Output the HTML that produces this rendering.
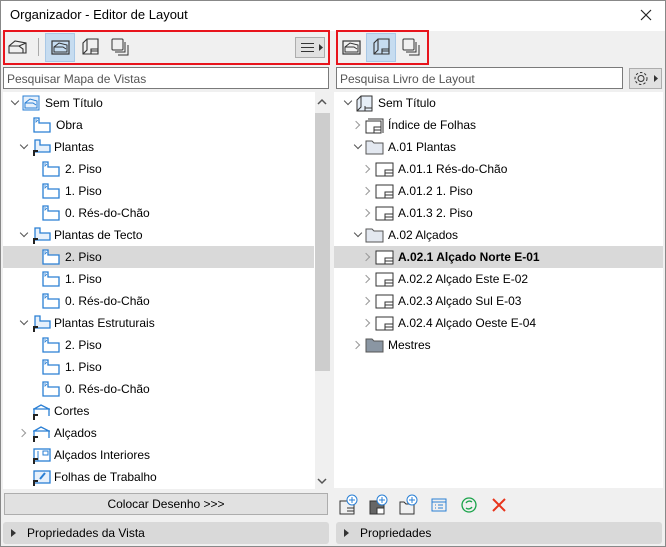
<!DOCTYPE html>
<html><head><meta charset="utf-8"><style>
*{margin:0;padding:0;box-sizing:border-box}
body{width:666px;height:547px;overflow:hidden;background:#f0f0f0;font-family:"Liberation Sans",sans-serif;font-size:12px;color:#000;position:relative}
.a{position:absolute}
.win{left:0;top:0;width:666px;height:547px;border:1px solid #888;}
.row{position:absolute;height:22px;line-height:22px;white-space:nowrap}
.chev{position:absolute;width:6px;height:6px;border-right:1.5px solid #555;border-bottom:1.5px solid #555}
.cd{transform:rotate(45deg)}
.cr{transform:rotate(-45deg);border-color:#999}
svg{position:absolute}
</style></head><body>
<div class="a win"></div>
<div class="a" style="left:1px;top:1px;width:664px;height:30px;background:#fff"></div>
<div class="a" style="left:10px;top:7px;font-size:13px">Organizador - Editor de Layout</div>
<svg style="left:640px;top:9px" width="12" height="12"><path d="M1 1L11 11M11 1L1 11" stroke="#222" stroke-width="1.2"/></svg>

<!-- left toolbar -->
<div class="a" style="left:3px;top:30px;width:327px;height:35px;border:2px solid #e8141c"></div>
<svg style="left:8px;top:39px" width="20" height="16"><path d="M1 14V7L7 2L18 4V14ZM1 7L11 7L15 10V14M11 7L18 4" fill="none" stroke="#333" stroke-width="1.1"/></svg>
<div class="a" style="left:38px;top:38px;width:1px;height:18px;background:#aaa"></div>
<div class="a" style="left:45px;top:33px;width:30px;height:29px;background:#c6dcf0;border:1px solid #a9c8e6"></div>
<svg style="left:51px;top:39px" width="20" height="17"><rect x="1" y="2" width="17" height="13" fill="none" stroke="#333" stroke-width="1.2"/><path d="M3 13V8L8 4L16 6V13ZM3 8L12 8L15 10" fill="none" stroke="#333"/></svg>
<svg style="left:81px;top:38px" width="19" height="18"><path d="M2 16V5L6 1H17V16ZM6 1V12L2 16M10 13H17M10 16V11H17" fill="none" stroke="#333" stroke-width="1.1"/></svg>
<svg style="left:111px;top:38px" width="18" height="18"><rect x="1" y="1" width="11" height="11" rx="1" fill="none" stroke="#333"/><path d="M4 14H14V4M7 17H17V7" fill="none" stroke="#333"/></svg>
<div class="a" style="left:295px;top:37px;width:30px;height:21px;background:#e1e1e1;border:1px solid #adadad"></div>
<svg style="left:300px;top:42px" width="24" height="12"><path d="M1 1.5H14M1 5.5H14M1 9.5H14" stroke="#333"/><path d="M19 2L23 5.5L19 9Z" fill="#333"/></svg>

<!-- right toolbar -->
<div class="a" style="left:336px;top:30px;width:93px;height:35px;border:2px solid #e8141c"></div>
<svg style="left:342px;top:39px" width="20" height="17"><rect x="1" y="2" width="17" height="13" fill="none" stroke="#333" stroke-width="1.2"/><path d="M3 13V8L8 4L16 6V13ZM3 8L12 8L15 10" fill="none" stroke="#333"/></svg>
<div class="a" style="left:366px;top:33px;width:30px;height:29px;background:#c6dcf0;border:1px solid #a9c8e6"></div>
<svg style="left:372px;top:38px" width="19" height="18"><path d="M2 16V5L6 1H17V16ZM6 1V12L2 16M10 13H17M10 16V11H17" fill="none" stroke="#333" stroke-width="1.1"/></svg>
<svg style="left:402px;top:38px" width="18" height="18"><rect x="1" y="1" width="11" height="11" rx="1" fill="none" stroke="#333"/><path d="M4 14H14V4M7 17H17V7" fill="none" stroke="#333"/></svg>

<!-- search boxes -->
<div class="a" style="left:3px;top:67px;width:326px;height:22px;background:#fff;border:1px solid #7a7a7a;color:#555;padding:4px 3px;font-size:12px">Pesquisar Mapa de Vistas</div>
<div class="a" style="left:336px;top:67px;width:287px;height:22px;background:#fff;border:1px solid #7a7a7a;color:#555;padding:4px 3px;font-size:12px">Pesquisa Livro de Layout</div>
<div class="a" style="left:629px;top:68px;width:33px;height:21px;background:#e1e1e1;border:1px solid #adadad"></div>
<svg style="left:632px;top:70px" width="28" height="17"><circle cx="9" cy="8.5" r="3" fill="none" stroke="#333"/><circle cx="9" cy="8.5" r="6" fill="none" stroke="#333" stroke-dasharray="2.5 2"/><path d="M22 5L26 8.5L22 12Z" fill="#333"/></svg>

<!-- left pane -->
<div class="a" style="left:3px;top:92px;width:312px;height:397px;background:#fff"></div>
<div class="a" style="left:315px;top:92px;width:15px;height:397px;background:#f0f0f0"></div>
<div class="a" style="left:315px;top:113px;width:15px;height:258px;background:#cdcdcd"></div>
<svg style="left:317px;top:98px" width="10" height="8"><path d="M1 6L5 2L9 6" fill="none" stroke="#555" stroke-width="1.5"/></svg>
<svg style="left:317px;top:477px" width="10" height="8"><path d="M1 2L5 6L9 2" fill="none" stroke="#555" stroke-width="1.5"/></svg>
<div class="a" style="left:3px;top:246px;width:311px;height:22px;background:#d9d9d9"></div>

<div id="L"></div>
<!-- right pane -->
<div class="a" style="left:334px;top:92px;width:329px;height:396px;background:#fff"></div>
<div class="a" style="left:334px;top:246px;width:329px;height:22px;background:#d9d9d9"></div>
<div id="R"></div>

<!-- bottom -->
<div class="a" style="left:4px;top:493px;width:324px;height:22px;background:#e1e1e1;border:1px solid #adadad;text-align:center;line-height:20px">Colocar Desenho &gt;&gt;&gt;</div>
<div class="a" style="left:3px;top:522px;width:326px;height:22px;background:#d9d9d9;border-radius:3px;line-height:22px;padding-left:24px">Propriedades da Vista</div>
<svg style="left:11px;top:529px" width="6" height="8"><path d="M0 0L5 4L0 8Z" fill="#333"/></svg>
<div class="a" style="left:336px;top:522px;width:326px;height:22px;background:#d9d9d9;border-radius:3px;line-height:22px;padding-left:24px">Propriedades</div>
<svg style="left:344px;top:529px" width="6" height="8"><path d="M0 0L5 4L0 8Z" fill="#333"/></svg>

<svg style="left:338px;top:494px" width="180" height="22">
<g fill="none" stroke="#333"><rect x="2" y="7" width="14" height="13"/><path d="M9 17H16M9 14H16V20"/></g><circle cx="14" cy="6" r="5" fill="#fff" stroke="#2a7fd4"/><path d="M14 3V9M11 6H17" stroke="#2a7fd4"/>
<g transform="translate(30,0)"><rect x="2" y="7" width="14" height="13" fill="#666" stroke="#333"/><path d="M9 14H16V20H9Z" fill="#fff" stroke="#333"/><circle cx="14" cy="6" r="5" fill="#fff" stroke="#2a7fd4"/><path d="M14 3V9M11 6H17" stroke="#2a7fd4"/></g>
<g transform="translate(60,0)"><path d="M2 20V8H6L8 10H16V20Z" fill="none" stroke="#333"/><circle cx="14" cy="6" r="5" fill="#fff" stroke="#2a7fd4"/><path d="M14 3V9M11 6H17" stroke="#2a7fd4"/></g>
<g transform="translate(92,0)"><rect x="2" y="5" width="14" height="12" fill="none" stroke="#2a7fd4"/><path d="M2 8H16M5 11H6M8 11H13M5 14H6M8 14H13" stroke="#2a7fd4"/></g>
<g transform="translate(122,0)"><circle cx="9" cy="11" r="7" fill="none" stroke="#1aa34a" stroke-width="1.3"/><path d="M6 9A4 4 0 0 1 12 8M12 13A4 4 0 0 1 6 14" fill="none" stroke="#1aa34a" stroke-width="1.3"/></g>
<g transform="translate(152,0)"><path d="M3 5L15 17M15 5L3 17" stroke="#e8341c" stroke-width="2"/></g>
</svg>

<script>
function ico(t){
 if(t=='root')return '<svg width="18" height="16"><rect x="1" y="1" width="16" height="14" fill="#e6f0fb" stroke="#2a7fd4"/><path d="M3 13V8L8 4L15 6V13ZM3 8L11 8L14 10" fill="none" stroke="#2a7fd4"/></svg>';
 if(t=='plan')return '<svg width="18" height="16"><path d="M1 15V1H6V6H17V15Z" fill="#fff" stroke="#2a7fd4" stroke-width="1.3"/><path d="M3 2V5L5 3" stroke="#2a7fd4" fill="none" stroke-width=".8"/></svg>';
 if(t=='pgrp')return '<svg width="20" height="18"><path d="M4 13V1H9V6H19V13Z" fill="#e6f0fb" stroke="#2a7fd4" stroke-width="1.3"/><path d="M3 17V12H7" stroke="#222" stroke-width="2" fill="none"/></svg>';
 if(t=='sec')return '<svg width="20" height="18"><path d="M3 13V6L10 2L18 6V13M2 6H19" fill="none" stroke="#2a7fd4" stroke-width="1.3"/><path d="M3 17V12H7" stroke="#222" stroke-width="2" fill="none"/></svg>';
 if(t=='int')return '<svg width="20" height="18"><rect x="3" y="2" width="16" height="12" fill="#fff" stroke="#2a7fd4" stroke-width="1.3"/><rect x="12" y="4" width="5" height="4" fill="none" stroke="#2a7fd4"/><path d="M7 4V14" stroke="#2a7fd4"/><path d="M3 17V12H7" stroke="#222" stroke-width="2" fill="none"/></svg>';
 if(t=='ws')return '<svg width="20" height="18"><rect x="3" y="2" width="16" height="12" fill="#e6f0fb" stroke="#2a7fd4" stroke-width="1.3"/><path d="M9 10L14 4" stroke="#2a7fd4" stroke-width="2"/><path d="M3 17V12H7" stroke="#222" stroke-width="2" fill="none"/></svg>';
 if(t=='book')return '<svg width="19" height="17"><path d="M2 16V5L6 1H17V16ZM6 1V12L2 16M10 13H17M10 16V11" fill="#e6eef7" stroke="#333"/></svg>';
 if(t=='sheet')return '<svg width="19" height="16"><rect x="1" y="2" width="17" height="13" fill="#fff" stroke="#333"/><path d="M10 12H18M10 15V9H18" fill="none" stroke="#333"/></svg>';
 if(t=='idx')return '<svg width="19" height="17"><path d="M3 2H18V16" fill="none" stroke="#333"/><rect x="1" y="4" width="15" height="12" fill="#fff" stroke="#333"/><path d="M9 13H16M9 16V10H16" fill="none" stroke="#333"/></svg>';
 if(t=='fold')return '<svg width="19" height="16"><path d="M1 15V2H7L9 4H18V15Z" fill="#e3e8f0" stroke="#555"/></svg>';
 if(t=='fdark')return '<svg width="19" height="16"><path d="M1 15V2H7L9 4H18V15Z" fill="#8a96a3" stroke="#555"/></svg>';
}
function row(x,y,ch,ic,txt,b){
 var h='';
 if(ch=='d')h+='<div class="chev cd" style="left:'+(x-10)+'px;top:'+(y+6)+'px"></div>';
 if(ch=='r')h+='<div class="chev cr" style="left:'+(x-12)+'px;top:'+(y+8)+'px"></div>';
 h+='<div class="a" style="left:'+x+'px;top:'+(y+3)+'px;width:20px;height:18px">'+ico(ic)+'</div>';
 h+='<div class="row" style="left:'+(x+23)+'px;top:'+y+'px;'+(b?'font-weight:bold':'')+'">'+txt+'</div>';
 return h;
}
var L=[[22,'d','root','Sem Título'],[33,'','plan','Obra'],[31,'d','pgrp','Plantas'],[42,'','plan','2. Piso'],[42,'','plan','1. Piso'],[42,'','plan','0. Rés-do-Chão'],[31,'d','pgrp','Plantas de Tecto'],[42,'','plan','2. Piso'],[42,'','plan','1. Piso'],[42,'','plan','0. Rés-do-Chão'],[31,'d','pgrp','Plantas Estruturais'],[42,'','plan','2. Piso'],[42,'','plan','1. Piso'],[42,'','plan','0. Rés-do-Chão'],[31,'','sec','Cortes'],[31,'r','sec','Alçados'],[31,'','int','Alçados Interiores'],[31,'','ws','Folhas de Trabalho']];
var h='';L.forEach(function(r,i){h+=row(r[0],92+i*22,r[1],r[2],r[3])});
document.getElementById('L').innerHTML=h;
var R=[[355,'d','book','Sem Título'],[365,'r','idx','Índice de Folhas'],[365,'d','fold','A.01 Plantas'],[375,'r','sheet','A.01.1 Rés-do-Chão'],[375,'r','sheet','A.01.2 1. Piso'],[375,'r','sheet','A.01.3 2. Piso'],[365,'d','fold','A.02 Alçados'],[375,'r','sheet','A.02.1 Alçado Norte E-01',1],[375,'r','sheet','A.02.2 Alçado Este E-02'],[375,'r','sheet','A.02.3 Alçado Sul E-03'],[375,'r','sheet','A.02.4 Alçado Oeste E-04'],[365,'r','fdark','Mestres']];
h='';R.forEach(function(r,i){h+=row(r[0],92+i*22,r[1],r[2],r[3],r[4])});
document.getElementById('R').innerHTML=h;
</script>
</body></html>
